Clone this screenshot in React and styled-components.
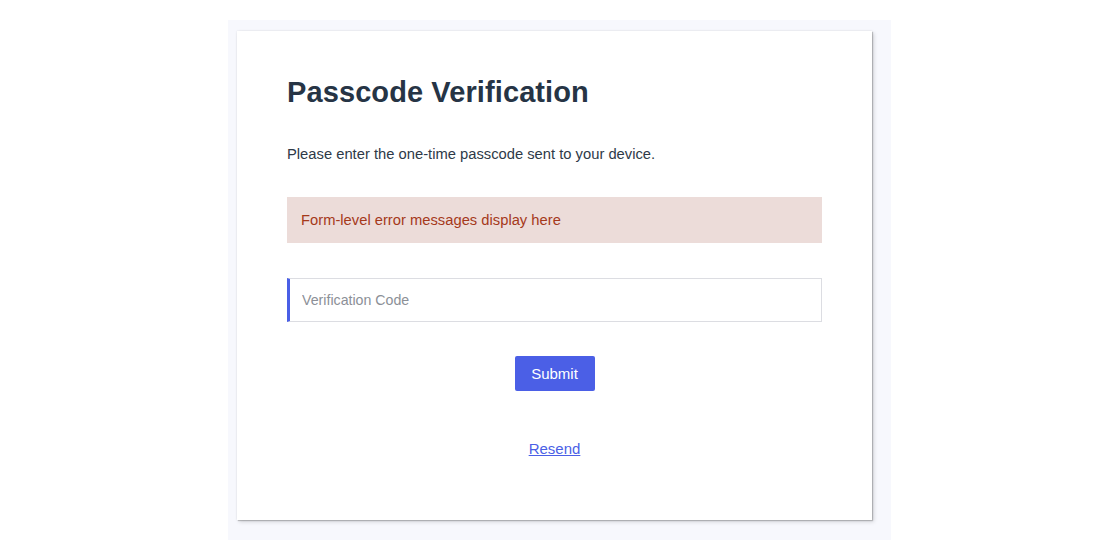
import React from "react";
import styled, { createGlobalStyle } from "styled-components";

const GlobalStyle = createGlobalStyle`
    body {
        margin:0;
        background:#ffffff;
        font-family:"Liberation Sans", Arial, sans-serif;
    }
`

const Page = styled.div`
    width:1120px;
    height:560px;
    display:flex;
    justify-content:center;
    padding:20px 1px 0 0;
    box-sizing:border-box;
`
const Panel = styled.div`
    width:663px;
    height:520px;
    box-sizing:border-box;
    background:#f7f8fd;
    padding:11px 19px 20px 9px;
`
const Card = styled.div`
    height:100%;
    box-sizing:border-box;
    background:#fff;
    padding:44px 50px 0 50px;
    box-shadow: 1px 1px 1px rgb(0 0 0 / 18%), 2px 2px 4px rgb(0 0 0 / 14%), 0 0 2px rgb(0 0 0 / 10%);
    display:flex;
    flex-direction:column;
`
const Title = styled.h1`
    margin:0;
    font-size:29px;
    font-weight:700;
    color:#263445;
    line-height:34px;
    letter-spacing:0.1px;
`
const Lead = styled.p`
    margin:35px 0 0 0;
    font-size:14.75px;
    line-height:20px;
    color:#2e3a48;
`
const ErrorBox = styled.div`
    margin-top:33px;
    height:46px;
    display:flex;
    align-items:center;
    padding:0 14px;
    background:#ecdcd9;
    color:#a5391b;
    font-size:14.75px;
`
const Input = styled.input`
    margin-top:35px;
    height:44px;
    box-sizing:border-box;
    border:1px solid #dcdde2;
    border-left:3px solid #4a5fe6;
    padding:0 12px;
    font-family:inherit;
    font-size:14.2px;
    color:#333;
    outline:none;
    &::placeholder {
        color:#8c9097;
    }
`
const Actions = styled.div`
    display:flex;
    flex-direction:column;
    align-items:center;
`
const Button = styled.button`
    margin-top:34px;
    width:80px;
    height:35px;
    border:none;
    border-radius:2px;
    background:#4b5fe6;
    color:#fff;
    font-family:inherit;
    font-size:15px;
    font-weight:400;
    cursor:pointer;
`
const Link = styled.a`
    margin-top:49px;
    font-size:15px;
    color:#4b5fe6;
    text-decoration:underline;
    cursor:pointer;
`

const App = ()=>{
    return(
        <Page>
            <GlobalStyle/>
            <Panel>
                <Card>
                    <Title>Passcode Verification</Title>
                    <Lead>Please enter the one-time passcode sent to your device.</Lead>
                    <ErrorBox>Form-level error messages display here</ErrorBox>
                    <Input placeholder="Verification Code"/>
                    <Actions>
                        <Button>Submit</Button>
                        <Link>Resend</Link>
                    </Actions>
                </Card>
            </Panel>
        </Page>
    )
}

export default App
